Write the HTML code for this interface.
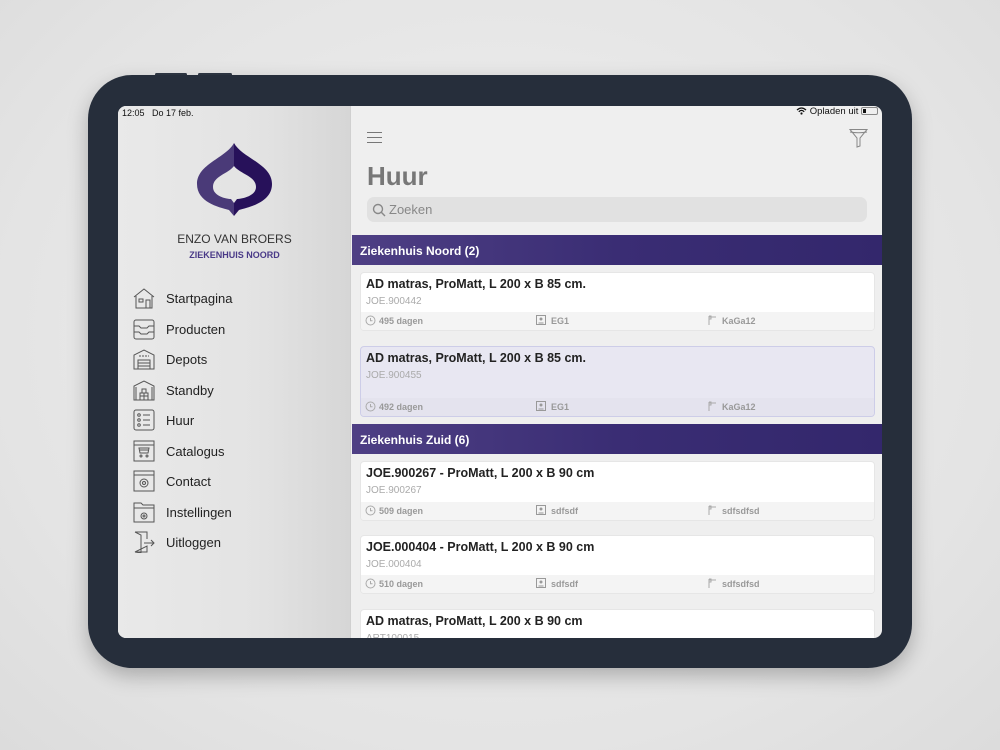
<!DOCTYPE html>
<html><head><meta charset="utf-8"><style>
*{margin:0;padding:0;box-sizing:border-box}
body{width:1000px;height:750px;overflow:hidden;background:radial-gradient(ellipse at 50% 45%,#f0f0f0 0%,#e4e4e4 70%,#dcdcdc 100%);font-family:"Liberation Sans",Arial,sans-serif;position:relative}
.bez{position:absolute;left:88px;top:75px;width:824px;height:593px;background:#262e3b;border-radius:44px;box-shadow:0 8px 20px rgba(0,0,0,.25)}
.btn{position:absolute;top:73px;height:3px;background:#2f3744;border-radius:2px}
.scr{position:absolute;left:118px;top:106px;width:764px;height:532px;border-radius:8px;overflow:hidden;background:#efefef}
.side{position:absolute;left:0;top:0;width:233px;height:532px;background:linear-gradient(90deg,#e9e9e9 0%,#e3e3e3 60%,#d6d6d6 100%);border-right:1px solid #d0d0d0}
.abs{position:absolute}
.st{font-size:9px;color:#111;top:2px}
.nav{position:absolute;left:48px;font-size:13px;color:#222}
.ic{position:absolute;left:14px}
.main{position:absolute;left:233px;top:0;width:531px;height:532px}
.hdr{position:absolute;left:1px;width:530px;height:30px;background:linear-gradient(90deg,#4e3f84 0%,#3a2d74 50%,#33276c 100%);color:#fff;font-weight:bold;font-size:12px;padding:9px 8px}
.card{position:absolute;left:9px;width:515px;background:#fff;border:1px solid #e6e6e6;border-radius:4px;overflow:hidden}
.card .t{position:absolute;left:5px;top:4px;font-size:12.5px;font-weight:bold;color:#222}
.card .s{position:absolute;left:5px;top:23px;font-size:10px;color:#aaa}
.card .f{position:absolute;left:0;bottom:0;width:100%;height:18px;background:#f4f4f4;font-size:9px;color:#999;font-weight:bold}
.f span{position:absolute;top:4px}
.f svg{position:absolute;top:3px}
</style></head><body>
<div class="btn" style="left:155px;width:32px"></div><div class="btn" style="left:198px;width:34px"></div>
<div class="bez"></div>
<div class="scr">
<div class="side">
<div class="abs st" style="left:4px">12:05&nbsp;&nbsp;&nbsp;Do 17 feb.</div>
<svg class="abs" style="left:0;top:0" width="233" height="120" viewBox="118 106 233 120">
<defs><clipPath id="l"><rect x="150" y="130" width="84" height="100"/></clipPath><clipPath id="r"><rect x="234" y="130" width="60" height="100"/></clipPath></defs>
<path fill-rule="evenodd" d="M234,143 C226,158 197,164 197,184 C197,202 218,207 229,210 L234,216 L239,210 C250,207 272,202 272,184 C272,164 242,158 234,143 Z M234,166 C228,174 213,176 213,187 C213,196 226,199 231,199 L234,203 L237,199 C242,199 256,196 256,187 C256,176 240,174 234,166 Z" fill="#4a3a78" clip-path="url(#l)"/>
<path fill-rule="evenodd" d="M234,143 C226,158 197,164 197,184 C197,202 218,207 229,210 L234,216 L239,210 C250,207 272,202 272,184 C272,164 242,158 234,143 Z M234,166 C228,174 213,176 213,187 C213,196 226,199 231,199 L234,203 L237,199 C242,199 256,196 256,187 C256,176 240,174 234,166 Z" fill="#27115a" clip-path="url(#r)"/>
</svg>
<div class="abs" style="left:0;width:233px;top:126px;text-align:center;font-size:12px;color:#333">ENZO VAN BROERS</div>
<div class="abs" style="left:0;width:233px;top:144px;text-align:center;font-size:9px;font-weight:bold;color:#4a3a88">ZIEKENHUIS NOORD</div>
<svg class="ic" style="top:181px" width="24" height="22" fill="none" stroke="#555" stroke-width="1"><path d="M2 10 L12 2 L22 10 M4 9 V21 H20 V9"/><rect x="7" y="12" width="4" height="3"/><path d="M14 21 V13 H18 V21"/></svg>
<div class="nav" style="top:185px">Startpagina</div>
<svg class="ic" style="top:212px" width="24" height="22" fill="none" stroke="#555" stroke-width="1"><rect x="2" y="2" width="20" height="19" rx="2"/><path d="M2 8 H7 L9 10 H15 L17 8 H22 M2 14 H7 L9 16 H15 L17 14 H22"/></svg>
<div class="nav" style="top:216px">Producten</div>
<svg class="ic" style="top:242px" width="24" height="22" fill="none" stroke="#555" stroke-width="1"><path d="M2 21 V7 L12 2 L22 7 V21 Z"/><path d="M7 8 H17" stroke-dasharray="2 1"/><rect x="6" y="12" width="12" height="9"/><path d="M6 15 H18 M6 18 H18"/></svg>
<div class="nav" style="top:246px">Depots</div>
<svg class="ic" style="top:273px" width="24" height="22" fill="none" stroke="#555" stroke-width="1"><path d="M2 21 V7 L12 2 L22 7 V21 Z"/><path d="M4 8 V21 M20 8 V21"/><rect x="8" y="14" width="8" height="7"/><rect x="10" y="10" width="4" height="4"/><path d="M12 14 V21 M8 17 H16"/></svg>
<div class="nav" style="top:277px">Standby</div>
<svg class="ic" style="top:303px" width="24" height="22" fill="none" stroke="#555" stroke-width="1"><rect x="2" y="1" width="20" height="20" rx="2"/><circle cx="7" cy="6" r="1.3"/><circle cx="7" cy="11" r="1.3"/><circle cx="7" cy="16" r="1.3"/><path d="M11 6 H18 M11 11 H18 M11 16 H18"/></svg>
<div class="nav" style="top:307px">Huur</div>
<svg class="ic" style="top:334px" width="24" height="22" fill="none" stroke="#555" stroke-width="1"><rect x="2" y="1" width="20" height="20"/><path d="M2 5 H22 M7 8 H17 L16 13 H8 Z M8 10 H16"/><circle cx="9" cy="16" r="1"/><circle cx="15" cy="16" r="1"/></svg>
<div class="nav" style="top:338px">Catalogus</div>
<svg class="ic" style="top:364px" width="24" height="22" fill="none" stroke="#555" stroke-width="1"><rect x="2" y="1" width="20" height="20"/><path d="M2 5 H22"/><circle cx="12" cy="13" r="4"/><circle cx="12" cy="13" r="1.5"/></svg>
<div class="nav" style="top:368px">Contact</div>
<svg class="ic" style="top:395px" width="24" height="22" fill="none" stroke="#555" stroke-width="1"><path d="M2 21 V2 H9 L11 4 H22 V21 Z M2 7 H22"/><circle cx="12" cy="15" r="3"/><circle cx="12" cy="15" r="1"/></svg>
<div class="nav" style="top:399px">Instellingen</div>
<svg class="ic" style="top:425px" width="24" height="22" fill="none" stroke="#555" stroke-width="1"><path d="M3 1 H15 V8 M15 15 V21 H3 Z M3 1 L9 4 V22 L3 21"/><path d="M12 12 H22 M19 9 L22 12 L19 15"/></svg>
<div class="nav" style="top:429px">Uitloggen</div>
</div>
<div class="main">
<div class="abs" style="right:4px;top:0;font-size:9.5px;color:#111;white-space:nowrap">
<svg width="11" height="8" style="vertical-align:-1px"><path d="M1 3 Q5.5 -1 10 3 M2.8 4.8 Q5.5 2 8.2 4.8" stroke="#111" stroke-width="1.3" fill="none"/><circle cx="5.5" cy="6.5" r="1.1" fill="#111"/></svg> Opladen uit <span style="display:inline-block;width:17px;height:8px;border:1px solid #888;border-radius:2px;vertical-align:-1px;position:relative"><span style="position:absolute;left:1px;top:1px;width:3px;height:4px;background:#111"></span></span></div>
<svg class="abs" style="left:16px;top:25px" width="16" height="14"><path d="M0 1.5 H15 M0 6.5 H15 M0 11.5 H15" stroke="#777" stroke-width="1"/></svg>
<svg class="abs" style="left:498px;top:22px" width="19" height="20" fill="none" stroke="#888" stroke-width="1"><path d="M1 1.5 H18 L11 10 V18 L8 19 V10 Z"/><path d="M1 4 Q9.5 5.5 18 4"/></svg>
<div class="abs" style="left:16px;top:55px;font-size:26px;font-weight:bold;color:#777">Huur</div>
<div class="abs" style="left:16px;top:91px;width:500px;height:25px;background:#e1e1e1;border-radius:7px">
<svg class="abs" style="left:5px;top:6px" width="14" height="14" fill="none" stroke="#888" stroke-width="1.4"><circle cx="6" cy="6" r="4.5"/><path d="M9.3 9.3 L13 13"/></svg>
<span class="abs" style="left:22px;top:5px;font-size:13px;color:#888">Zoeken</span></div>
<div class="hdr" style="top:129px">Ziekenhuis Noord (2)</div>
<div class="card" style="top:166px;height:59px"><div class="t">AD matras, ProMatt, L 200 x B 85 cm.</div><div class="s">JOE.900442</div><div class="f"><svg style="left:4px" width="11" height="11"><circle cx="5.5" cy="5.5" r="4.5" fill="none" stroke="#aaa"/><path d="M5.5 3V5.8H7.5" stroke="#aaa" fill="none"/></svg><span style="left:18px">495 dagen</span><svg style="left:175px" width="10" height="10"><rect x=".5" y=".5" width="9" height="9" fill="none" stroke="#999"/><circle cx="5" cy="4" r="1.5" fill="#999"/><path d="M2.5 8 H7.5" stroke="#999"/></svg><span style="left:190px">EG1</span><svg style="left:346px" width="10" height="11"><path d="M2 1 V10 M2 1 H4 V4 H2 M2 2 H9" stroke="#aaa" fill="none"/></svg><span style="left:361px">KaGa12</span></div></div>
<div class="card" style="top:240px;height:71px;background:#e8e7f2;border-color:#cdcde8"><div class="t">AD matras, ProMatt, L 200 x B 85 cm.</div><div class="s">JOE.900455</div><div class="f" style="background:#e4e3ee"><svg style="left:4px" width="11" height="11"><circle cx="5.5" cy="5.5" r="4.5" fill="none" stroke="#aaa"/><path d="M5.5 3V5.8H7.5" stroke="#aaa" fill="none"/></svg><span style="left:18px">492 dagen</span><svg style="left:175px" width="10" height="10"><rect x=".5" y=".5" width="9" height="9" fill="none" stroke="#999"/><circle cx="5" cy="4" r="1.5" fill="#999"/><path d="M2.5 8 H7.5" stroke="#999"/></svg><span style="left:190px">EG1</span><svg style="left:346px" width="10" height="11"><path d="M2 1 V10 M2 1 H4 V4 H2 M2 2 H9" stroke="#aaa" fill="none"/></svg><span style="left:361px">KaGa12</span></div></div>
<div class="hdr" style="top:318px">Ziekenhuis Zuid (6)</div>
<div class="card" style="top:355px;height:60px"><div class="t">JOE.900267 - ProMatt, L 200 x B 90 cm</div><div class="s">JOE.900267</div><div class="f"><svg style="left:4px" width="11" height="11"><circle cx="5.5" cy="5.5" r="4.5" fill="none" stroke="#aaa"/><path d="M5.5 3V5.8H7.5" stroke="#aaa" fill="none"/></svg><span style="left:18px">509 dagen</span><svg style="left:175px" width="10" height="10"><rect x=".5" y=".5" width="9" height="9" fill="none" stroke="#999"/><circle cx="5" cy="4" r="1.5" fill="#999"/><path d="M2.5 8 H7.5" stroke="#999"/></svg><span style="left:190px">sdfsdf</span><svg style="left:346px" width="10" height="11"><path d="M2 1 V10 M2 1 H4 V4 H2 M2 2 H9" stroke="#aaa" fill="none"/></svg><span style="left:361px">sdfsdfsd</span></div></div>
<div class="card" style="top:429px;height:59px"><div class="t">JOE.000404 - ProMatt, L 200 x B 90 cm</div><div class="s">JOE.000404</div><div class="f"><svg style="left:4px" width="11" height="11"><circle cx="5.5" cy="5.5" r="4.5" fill="none" stroke="#aaa"/><path d="M5.5 3V5.8H7.5" stroke="#aaa" fill="none"/></svg><span style="left:18px">510 dagen</span><svg style="left:175px" width="10" height="10"><rect x=".5" y=".5" width="9" height="9" fill="none" stroke="#999"/><circle cx="5" cy="4" r="1.5" fill="#999"/><path d="M2.5 8 H7.5" stroke="#999"/></svg><span style="left:190px">sdfsdf</span><svg style="left:346px" width="10" height="11"><path d="M2 1 V10 M2 1 H4 V4 H2 M2 2 H9" stroke="#aaa" fill="none"/></svg><span style="left:361px">sdfsdfsd</span></div></div>
<div class="card" style="top:503px;height:60px"><div class="t">AD matras, ProMatt, L 200 x B 90 cm</div><div class="s">ART100015</div></div>
</div>
</div>
</body></html>
